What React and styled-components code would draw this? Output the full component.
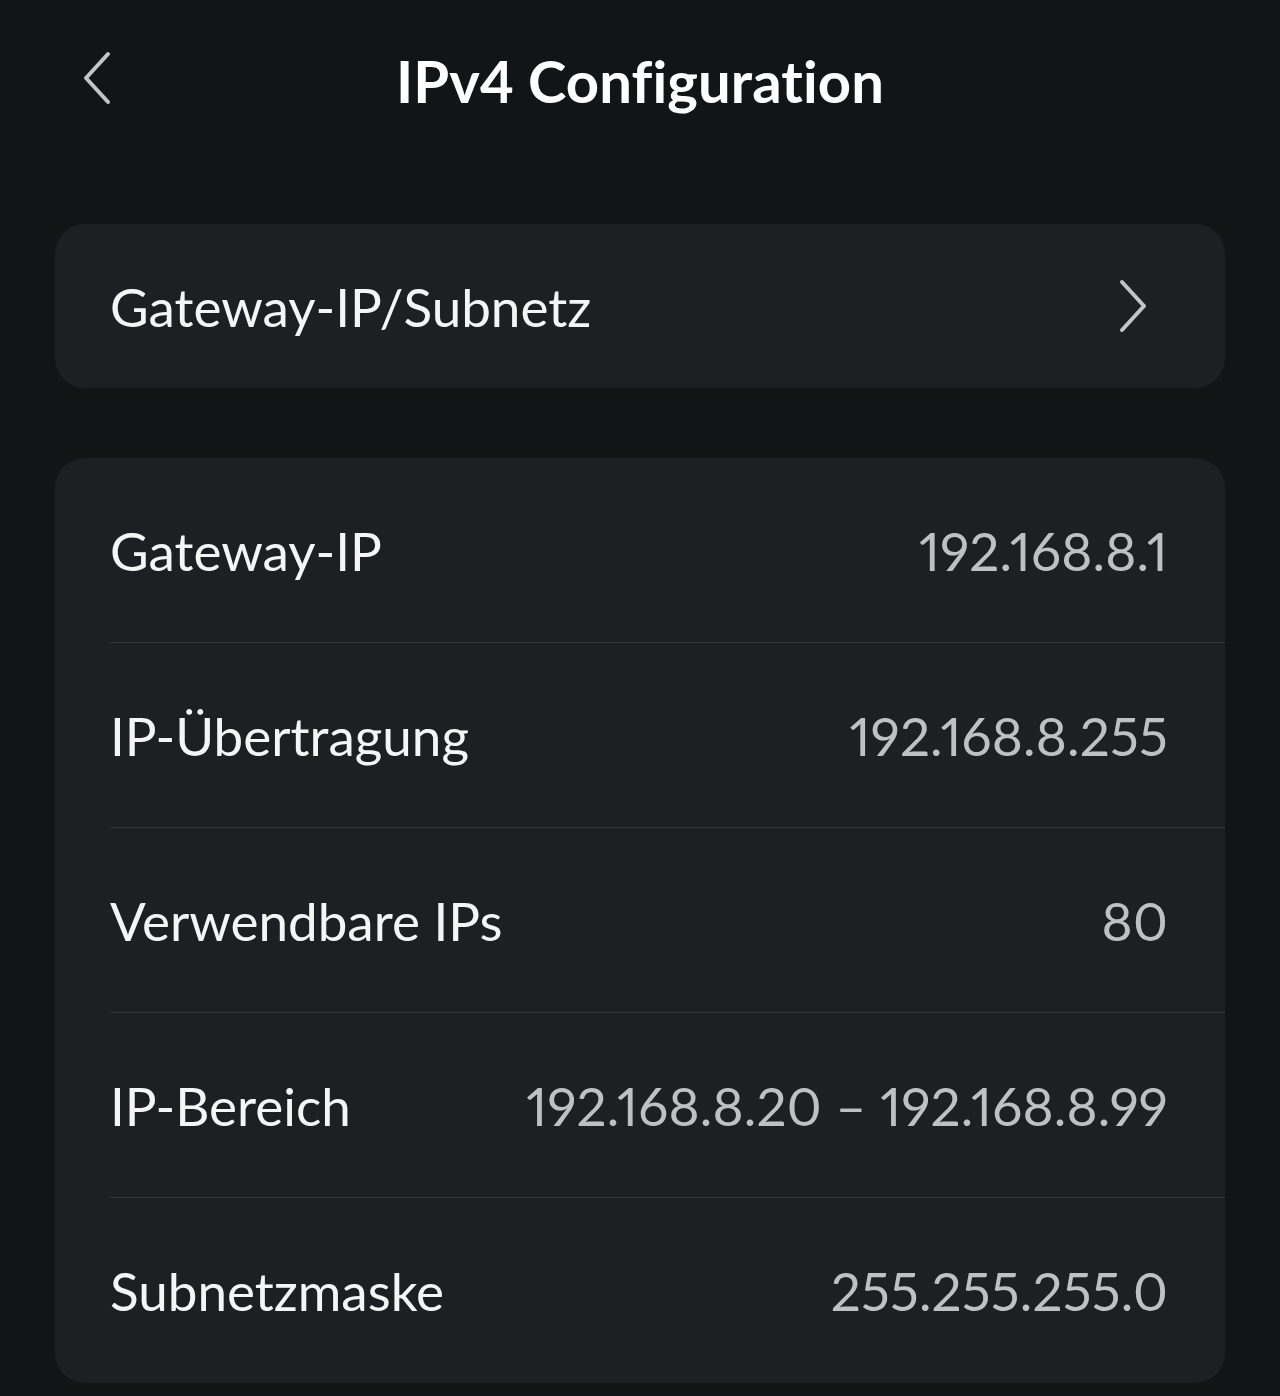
import React from "react";
import styled, { createGlobalStyle } from "styled-components";

const Global = createGlobalStyle`
  html, body { margin: 0; padding: 0; background: #131416; }
  body {
    font-family: Lato, "Noto Sans", sans-serif;
    font-variant-ligatures: none;
    font-feature-settings: "liga" 0, "clig" 0;
  }
`;

const Page = styled.div`
  width: 1280px;
  min-height: 1396px;
  background: #131416;
  box-sizing: border-box;
  padding: 0 55px;
`;

const Header = styled.header`
  position: relative;
  height: 160px;
  display: flex;
  align-items: center;
  justify-content: center;
`;

const BackButton = styled.button`
  position: absolute;
  left: 22px;
  top: 48px;
  width: 40px;
  height: 60px;
  padding: 0;
  border: none;
  background: transparent;
  display: flex;
  align-items: center;
  justify-content: center;
`;

const Title = styled.h1`
  margin: 0;
  font-size: 58px;
  font-weight: 700;
  color: #ffffff;
  letter-spacing: 0.1px;
`;

const Card = styled.section`
  background: #1e1f23;
  border-radius: 30px;
  margin-top: ${(p) => p.$mt}px;
  overflow: hidden;
`;

const Row = styled.div`
  height: ${(p) => p.$h}px;
  display: flex;
  align-items: center;
  justify-content: space-between;
  padding: 0 57px 0 55px;
  position: relative;
  &:not(:last-child)::after {
    content: "";
    position: absolute;
    left: 55px;
    right: 0;
    bottom: 0;
    height: 1.5px;
    background: #34353a;
  }
`;

const Label = styled.span`
  font-size: 53px;
  color: #f5f5f5;
`;

const Value = styled.span`
  font-size: 53px;
  color: #bfc0c3;
  font-variant-numeric: proportional-nums;
  letter-spacing: 0.2px;
`;

const ChevronSlot = styled.span`
  display: flex;
  margin-right: 18px;
`;

const Chevron = ({ dir }) => (
  <svg width="34" height="56" viewBox="0 0 34 56" fill="none">
    <path
      d={dir === "left" ? "M28 4 L6 28 L28 52" : "M6 4 L28 28 L6 52"}
      stroke="#c4c4c6"
      strokeWidth="4"
      strokeLinecap="round"
      strokeLinejoin="round"
    />
  </svg>
);

const rows = [
  ["Gateway-IP", "192.168.8.1"],
  ["IP-Übertragung", "192.168.8.255"],
  ["Verwendbare IPs", "80"],
  ["IP-Bereich", "192.168.8.20 – 192.168.8.99"],
  ["Subnetzmaske", "255.255.255.0"],
];

export default function App() {
  return (
    <>
      <Global />
      <Page>
        <Header>
          <BackButton aria-label="Zurück">
            <Chevron dir="left" />
          </BackButton>
          <Title>IPv4 Configuration</Title>
        </Header>
        <Card $mt={64}>
          <Row $h={164}>
            <Label>Gateway-IP/Subnetz</Label>
            <ChevronSlot>
              <Chevron dir="right" />
            </ChevronSlot>
          </Row>
        </Card>
        <Card $mt={70}>
          {rows.map(([l, v]) => (
            <Row key={l} $h={185}>
              <Label>{l}</Label>
              <Value>{v}</Value>
            </Row>
          ))}
        </Card>
      </Page>
    </>
  );
}
